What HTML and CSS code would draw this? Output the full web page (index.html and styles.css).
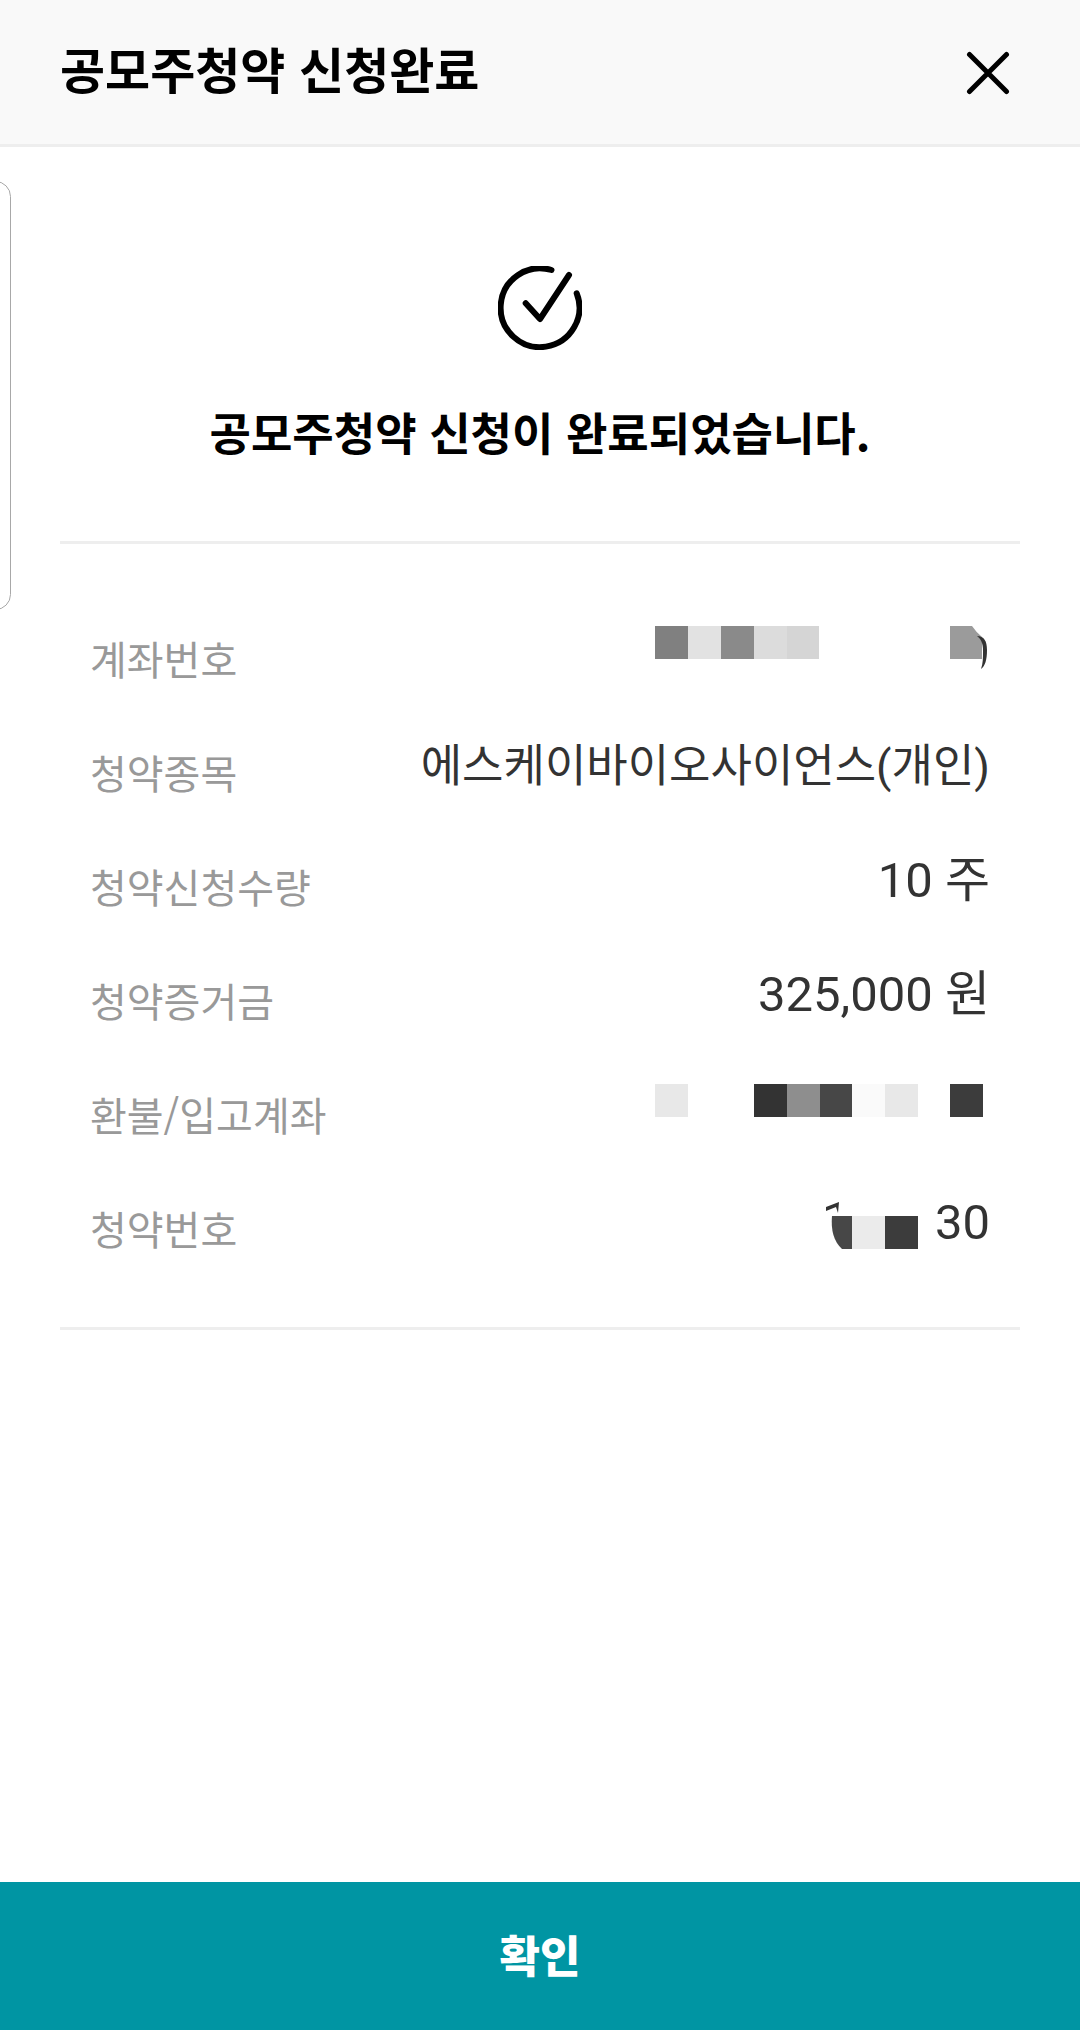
FILE: index.html
```html
<!DOCTYPE html>
<html lang="ko">

<head>
  <meta charset="UTF-8">
  <meta name="viewport" content="width=device-width, initial-scale=1.0">
  <title>공모주청약 신청완료</title>
  <link rel="stylesheet" href="styles.css">
</head>

<body>
  <header class="header">
    <h1>공모주청약 신청완료</h1>
    <button type="button" class="close" aria-label="닫기">
      <svg width="44" height="44" viewBox="0 0 44 44">
        <path d="M3.5 3.5 40.5 40.5M40.5 3.5 3.5 40.5" />
      </svg>
    </button>
  </header>

  <div class="edge-panel"></div>

  <main class="content">
    <section class="result">
      <svg class="check" width="84" height="84" viewBox="0 0 84 84">
        <path d="M53.5 4A39.4 39.4 0 1 0 78.7 27.3" />
        <path d="M27.7 37.3 42 53 71 9" />
      </svg>
      <p>공모주청약 신청이 완료되었습니다.</p>
    </section>

    <dl class="details">
      <div class="row">
        <dt>계좌번호</dt>
        <dd>
          <svg class="mask" width="340" height="66" viewBox="0 0 340 66">
            <rect x="5" y="6" width="33" height="33" fill="#808080" />
            <rect x="38" y="6" width="33" height="33" fill="#e2e2e2" />
            <rect x="71" y="6" width="33" height="33" fill="#8a8a8a" />
            <rect x="104" y="6" width="33" height="33" fill="#dcdcdc" />
            <rect x="137" y="6" width="32" height="33" fill="#d5d5d5" />
            <path d="M300 6H322Q326 12 332 17V39H300Z" fill="#9b9b9b" />
            <path d="M327 16C334 16 337 21 337 30C337 40 335 46 331 49C333 43 333 38 333 31C333 23 331 19 327 16Z" fill="#333" />
          </svg>
        </dd>
      </div>
      <div class="row">
        <dt>청약종목</dt>
        <dd class="name">에스케이바이오사이언스(개인)</dd>
      </div>
      <div class="row">
        <dt>청약신청수량</dt>
        <dd>10 주</dd>
      </div>
      <div class="row">
        <dt>청약증거금</dt>
        <dd>325,000 원</dd>
      </div>
      <div class="row">
        <dt>환불/입고계좌</dt>
        <dd>
          <svg class="mask" width="340" height="66" viewBox="0 0 340 66">
            <rect x="5" y="8" width="33" height="33" fill="#e8e8e8" />
            <rect x="104" y="8" width="33" height="33" fill="#333" />
            <rect x="137" y="8" width="33" height="33" fill="#8e8e8e" />
            <rect x="170" y="8" width="32" height="33" fill="#474747" />
            <rect x="202" y="8" width="33" height="33" fill="#fafafa" />
            <rect x="235" y="8" width="33" height="33" fill="#e8e8e8" />
            <rect x="300" y="8" width="33" height="33" fill="#3c3c3c" />
          </svg>
        </dd>
      </div>
      <div class="row">
        <dt>청약번호</dt>
        <dd>
          <svg class="mask" width="113" height="66" viewBox="0 0 113 66">
            <path d="M4 17 17 12 16 23 14 17 4 21Z" fill="#333" />
            <path d="M10 26H30V59H20Q8 48 10 26Z" fill="#474747" />
            <rect x="30" y="26" width="33" height="33" fill="#ebebeb" />
            <rect x="63" y="26" width="33" height="33" fill="#3c3c3c" />
          </svg>
          30
        </dd>
      </div>
    </dl>
  </main>

  <button type="button" class="confirm">확인</button>
</body>

</html>
```
FILE: styles.css
```css
* {
  box-sizing: border-box;
  margin: 0;
  padding: 0;
}

body {
  display: flex;
  flex-direction: column;
  min-height: 100vh;
  padding-bottom: 2px;
  background-color: #fff;
  color: #000;
  font-family: "Noto Sans CJK KR", sans-serif;
}

.header {
  display: flex;
  justify-content: space-between;
  align-items: flex-end;
  padding: 32px 70px 40px 60px;
  border-bottom: 3px solid #eee;
  background-color: #f9f9f9;
}

.header h1 {
  font-size: 49px;
  font-weight: 700;
  line-height: 72px;
}

.close {
  display: flex;
  padding-bottom: 9px;
  border: 0;
  background: none;
}

.close path,
.check path {
  fill: none;
  stroke: #000;
  stroke-width: 5;
  stroke-linecap: round;
  stroke-linejoin: round;
}

/* handle that peeks in from the left edge */
.edge-panel {
  position: absolute;
  top: 181px;
  left: -20px;
  width: 31px;
  height: 429px;
  border: 1px solid #a8a8a8;
  border-radius: 16px;
}

.content {
  flex: 1;
  padding: 0 60px;
}

.result {
  display: flex;
  flex-direction: column;
  align-items: center;
  gap: 48px;
  padding: 119px 0 76px;
  border-bottom: 3px solid #eee;
}

.result p {
  font-size: 45px;
  font-weight: 700;
  line-height: 67px;
}

.details {
  display: flex;
  flex-direction: column;
  gap: 48px;
  padding: 76px 30px 71px;
  border-bottom: 3px solid #eee;
}

.row {
  display: flex;
  justify-content: space-between;
  height: 66px;
}

.row dt {
  padding-top: 5px;
  color: #999;
  font-size: 40px;
  line-height: 66px;
}

.row dd {
  display: flex;
  color: #333;
  font-family: Roboto, "Noto Sans CJK KR", sans-serif;
  font-size: 49px;
  line-height: 66px;
}

.row .name {
  font-size: 45px;
}

.check path {
  stroke-width: 6;
}

.confirm {
  height: 148px;
  padding-bottom: 4px;
  border: 0;
  background-color: #0095a3;
  color: #fff;
  font-family: "Noto Sans CJK KR", sans-serif;
  font-size: 44px;
  font-weight: 900;
}
```
